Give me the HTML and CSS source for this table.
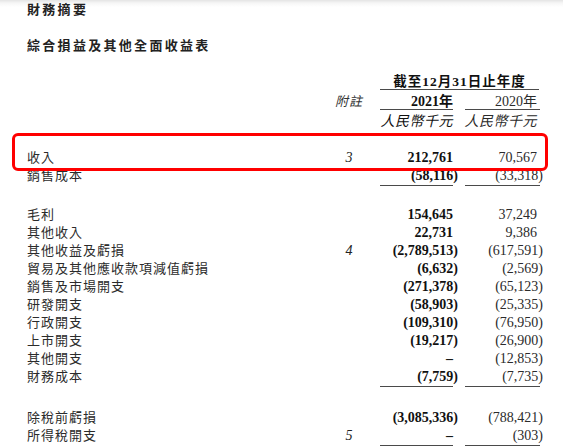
FILE: index.html
```html
<!DOCTYPE html>
<html lang="zh-Hant">
<head>
<meta charset="utf-8">
<title>財務摘要</title>
<link rel="stylesheet" href="styles.css">
</head>
<body>
<main class="page">
  <h1 class="title">財務摘要</h1>
  <h2 class="subtitle">綜合損益及其他全面收益表</h2>

  <section class="sheet">
    <div class="row head1"><div class="period">截至12月31日止年度</div></div>
    <div class="row rules"><div class="rule span"></div></div>
    <div class="row head2">
      <div class="note-h">附註</div>
      <div class="num c1 b">2021年</div>
      <div class="num c2">2020年</div>
    </div>
    <div class="row rules"><div class="rule r1"></div><div class="rule r2"></div></div>
    <div class="row head3">
      <div class="num c1 unit">人民幣千元</div>
      <div class="num c2 unit">人民幣千元</div>
    </div>

    <div class="group g-first">
      <div class="row"><div class="label">收入</div><div class="note">3</div><div class="num c1 b">212,761</div><div class="num c2">70,567</div></div>
      <div class="row"><div class="label">銷售成本</div><div class="note"></div><div class="num c1 b n">(58,116)</div><div class="num c2 n">(33,318)</div></div>
      <div class="row rules"><div class="rule r1"></div><div class="rule r2"></div></div>
    </div>

    <div class="group g-mid">
      <div class="row"><div class="label">毛利</div><div class="note"></div><div class="num c1 b">154,645</div><div class="num c2">37,249</div></div>
      <div class="row"><div class="label">其他收入</div><div class="note"></div><div class="num c1 b">22,731</div><div class="num c2">9,386</div></div>
      <div class="row"><div class="label">其他收益及虧損</div><div class="note">4</div><div class="num c1 b n">(2,789,513)</div><div class="num c2 n">(617,591)</div></div>
      <div class="row"><div class="label">貿易及其他應收款項減值虧損</div><div class="note"></div><div class="num c1 b n">(6,632)</div><div class="num c2 n">(2,569)</div></div>
      <div class="row"><div class="label">銷售及市場開支</div><div class="note"></div><div class="num c1 b n">(271,378)</div><div class="num c2 n">(65,123)</div></div>
      <div class="row"><div class="label">研發開支</div><div class="note"></div><div class="num c1 b n">(58,903)</div><div class="num c2 n">(25,335)</div></div>
      <div class="row"><div class="label">行政開支</div><div class="note"></div><div class="num c1 b n">(109,310)</div><div class="num c2 n">(76,950)</div></div>
      <div class="row"><div class="label">上市開支</div><div class="note"></div><div class="num c1 b n">(19,217)</div><div class="num c2 n">(26,900)</div></div>
      <div class="row"><div class="label">其他開支</div><div class="note"></div><div class="num c1 b">–</div><div class="num c2 n">(12,853)</div></div>
      <div class="row"><div class="label">財務成本</div><div class="note"></div><div class="num c1 b n">(7,759)</div><div class="num c2 n">(7,735)</div></div>
      <div class="row rules"><div class="rule r1"></div><div class="rule r2"></div></div>
    </div>

    <div class="group g-last">
      <div class="row"><div class="label">除稅前虧損</div><div class="note"></div><div class="num c1 b n">(3,085,336)</div><div class="num c2 n">(788,421)</div></div>
      <div class="row"><div class="label">所得稅開支</div><div class="note">5</div><div class="num c1 b">–</div><div class="num c2 n">(303)</div></div>
      <div class="row rules"><div class="rule r1"></div><div class="rule r2"></div></div>
    </div>

    <div class="highlight"></div>
  </section>
</main>
</body>
</html>
```

FILE: styles.css
```css
html, body {
  margin: 0;
  padding: 0;
}

body {
  width: 563px;
  height: 446px;
  overflow: hidden;
  background: linear-gradient(#e4e4e4 0px, #f6f6f6 3px, #ffffff 7px) no-repeat;
  color: #111;
  font-family: "Liberation Serif", "Noto Sans CJK TC", serif;
}

.page {
  padding-left: 27px;
}

.title,
.subtitle {
  margin: 0;
  font-family: "Noto Sans CJK TC", sans-serif;
  font-size: 13px;
  font-weight: 700;
  line-height: 18px;
  letter-spacing: 2.3px;
  color: #222;
}

.subtitle {
  margin-top: 18px;
}

.sheet {
  position: relative;
  font-size: 13px;
  line-height: 18px;
}

.row {
  display: grid;
  grid-template-columns: 301px 42px 88px 85px;
}

.head1 {
  margin-top: 20px;
  line-height: 15px;
}

.period {
  grid-column: 3 / 5;
  margin-left: 10px;
  margin-right: 4px;
  text-align: center;
  font-size: 13.5px;
  font-weight: 700;
  letter-spacing: 1px;
}

.head2 {
  margin-top: 4px;
  line-height: 15px;
}

.note-h {
  grid-column: 2;
  text-align: center;
  font-style: italic;
  letter-spacing: 1px;
  color: #333;
}

.head3 {
  margin-top: 3px;
}

.unit {
  font-size: 13px;
  font-style: italic;
  letter-spacing: 0.5px;
}

.head3 .c1 {
  grid-column: 3;
}

.rules {
  height: 1px;
}

.rule {
  height: 1px;
  background: #4a4a4a;
}

.rule.span {
  grid-column: 3 / 5;
  margin-left: 10px;
  margin-right: 4px;
}

.rule.r1 {
  grid-column: 3;
  margin-left: 10px;
  margin-right: 5px;
}

.rule.r2 {
  grid-column: 4;
  margin-left: 7px;
  margin-right: 3px;
}

.g-first {
  margin-top: 18px;
}

.g-mid {
  margin-top: 20px;
}

.g-last {
  margin-top: 22px;
}

.label {
  letter-spacing: 1px;
  color: #2b2b2b;
  white-space: nowrap;
}

.note {
  text-align: center;
  font-size: 14px;
  font-style: italic;
  color: #222;
}

.num {
  text-align: right;
  white-space: nowrap;
  font-size: 14px;
}

.c1 {
  grid-column: 3;
  padding-right: 5px;
}

.c2 {
  grid-column: 4;
  padding-right: 6px;
  color: #2b2b2b;
}

.b {
  font-weight: 700;
}

.num.n {
  padding-right: 0;
}

.highlight {
  position: absolute;
  left: -15px;
  top: 59px;
  width: 536px;
  height: 38px;
  box-sizing: border-box;
  border: 3px solid #ff0000;
  border-radius: 6px;
  pointer-events: none;
}
```
